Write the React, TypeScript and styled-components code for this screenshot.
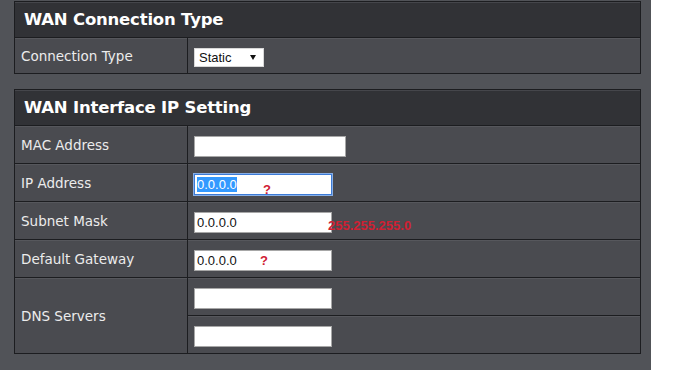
import React, { useEffect, useRef } from "react";
import styled, { createGlobalStyle } from "styled-components";

const Global = createGlobalStyle`
  html, body { margin: 0; padding: 0; background: #ffffff; }
  body { font-family: "DejaVu Sans", Verdana, sans-serif; }
  * { box-sizing: border-box; }
`;

const Page = styled.div`
  width: 651px;
  background: #515358;
  padding: 1px 10px 16px 14px;
  display: flex;
  flex-direction: column;
  gap: 15px;
`;

const Panel = styled.section`
  width: 627px;
  border: 1px solid #1c1d20;
  background: #4a4b50;
  display: flex;
  flex-direction: column;
`;

const Header = styled.h2`
  margin: 0;
  height: 36px;
  padding: 0 0 0 9px;
  display: flex;
  align-items: center;
  background: #313236;
  border-bottom: 1px solid #1c1d20;
  box-shadow: inset 0 1px 0 #45464b;
  color: #ffffff;
  font: bold 16.5px "DejaVu Sans", Verdana, sans-serif;
  letter-spacing: -0.2px;
`;

const Row = styled.div<{ $h: number; $last?: boolean }>`
  display: grid;
  grid-template-columns: 173px 1fr;
  height: ${(p) => p.$h}px;
  border-bottom: ${(p) => (p.$last ? "none" : "1px solid #1c1d20")};
`;

const DnsRow = styled.div`
  display: grid;
  grid-template-columns: 173px 1fr;
  grid-template-rows: 38px 37px;
`;

const Label = styled.div<{ $span?: number }>`
  grid-row: ${(p) => (p.$span ? `span ${p.$span}` : "auto")};
  display: flex;
  align-items: center;
  padding-left: 6px;
  border-right: 1px solid #1c1d20;
  box-shadow: inset 0 1px 0 #56575c;
  color: #ececec;
  font-size: 13.5px;
`;

const Value = styled.div<{ $divider?: boolean }>`
  position: relative;
  padding: 10px 0 0 6px;
  box-shadow: inset 0 1px 0 #56575c;
  border-bottom: ${(p) => (p.$divider ? "1px solid #1c1d20" : "none")};
`;

const TextInput = styled.input<{ $w: number; $focus?: boolean }>`
  display: block;
  width: ${(p) => p.$w}px;
  height: 21px;
  margin: 0;
  padding: 0 2px;
  background: #ffffff;
  border: 1px solid ${(p) => (p.$focus ? "#3d7bd6" : "#a7a7a7")};
  box-shadow: ${(p) => (p.$focus ? "0 0 0 1px #86aee6" : "none")};
  outline: none;
  color: #111111;
  font: 13px "Liberation Sans", Arial, sans-serif;
  &::selection {
    background: #3399ff;
    color: #ffffff;
  }
`;

const SelectWrap = styled.div`
  position: relative;
  width: 70px;
  height: 19px;
  &::after {
    content: "";
    position: absolute;
    right: 8px;
    top: 7px;
    border-left: 3px solid transparent;
    border-right: 3px solid transparent;
    border-top: 5px solid #111111;
    pointer-events: none;
  }
`;

const Select = styled.select`
  appearance: none;
  -webkit-appearance: none;
  display: block;
  width: 100%;
  height: 100%;
  margin: 0;
  padding: 0 0 0 4px;
  background: #ffffff;
  border: 1px solid #d8d8d8;
  border-radius: 0;
  color: #111111;
  font: 13px "Liberation Sans", Arial, sans-serif;
  outline: none;
`;

const Hint = styled.span<{ $x: number; $y: number; $big?: boolean }>`
  position: absolute;
  left: ${(p) => p.$x}px;
  top: ${(p) => p.$y}px;
  color: #d02033;
  font: bold ${(p) => (p.$big ? "13px" : "13px")} "Liberation Sans", Arial, sans-serif;
  line-height: 1;
  pointer-events: none;
`;

export default function App() {
  const ipRef = useRef<HTMLInputElement>(null);
  useEffect(() => {
    const el = ipRef.current;
    if (el) {
      el.focus();
      el.setSelectionRange(0, el.value.length);
    }
  }, []);

  return (
    <>
      <Global />
      <Page>
        <Panel>
          <Header>WAN Connection Type</Header>
          <Row $h={35} $last>
            <Label>Connection Type</Label>
            <Value>
              <SelectWrap>
                <Select defaultValue="static">
                  <option value="static">Static</option>
                  <option value="dhcp">DHCP</option>
                  <option value="pppoe">PPPoE</option>
                </Select>
              </SelectWrap>
            </Value>
          </Row>
        </Panel>
        <Panel>
          <Header>WAN Interface IP Setting</Header>
          <Row $h={38}>
            <Label>MAC Address</Label>
            <Value>
              <TextInput $w={152} defaultValue="" />
            </Value>
          </Row>
          <Row $h={38}>
            <Label>IP Address</Label>
            <Value>
              <TextInput ref={ipRef} $w={138} $focus defaultValue="0.0.0.0" />
              <Hint $x={75} $y={19} $big>?</Hint>
            </Value>
          </Row>
          <Row $h={38}>
            <Label>Subnet Mask</Label>
            <Value>
              <TextInput $w={138} defaultValue="0.0.0.0" />
              <Hint $x={140} $y={17}>255.255.255.0</Hint>
            </Value>
          </Row>
          <Row $h={38}>
            <Label>Default Gateway</Label>
            <Value>
              <TextInput $w={138} defaultValue="0.0.0.0" />
              <Hint $x={72} $y={14} $big>?</Hint>
            </Value>
          </Row>
          <DnsRow>
            <Label $span={2}>DNS Servers</Label>
            <Value $divider>
              <TextInput $w={138} defaultValue="" />
            </Value>
            <Value>
              <TextInput $w={138} defaultValue="" />
            </Value>
          </DnsRow>
        </Panel>
      </Page>
    </>
  );
}
